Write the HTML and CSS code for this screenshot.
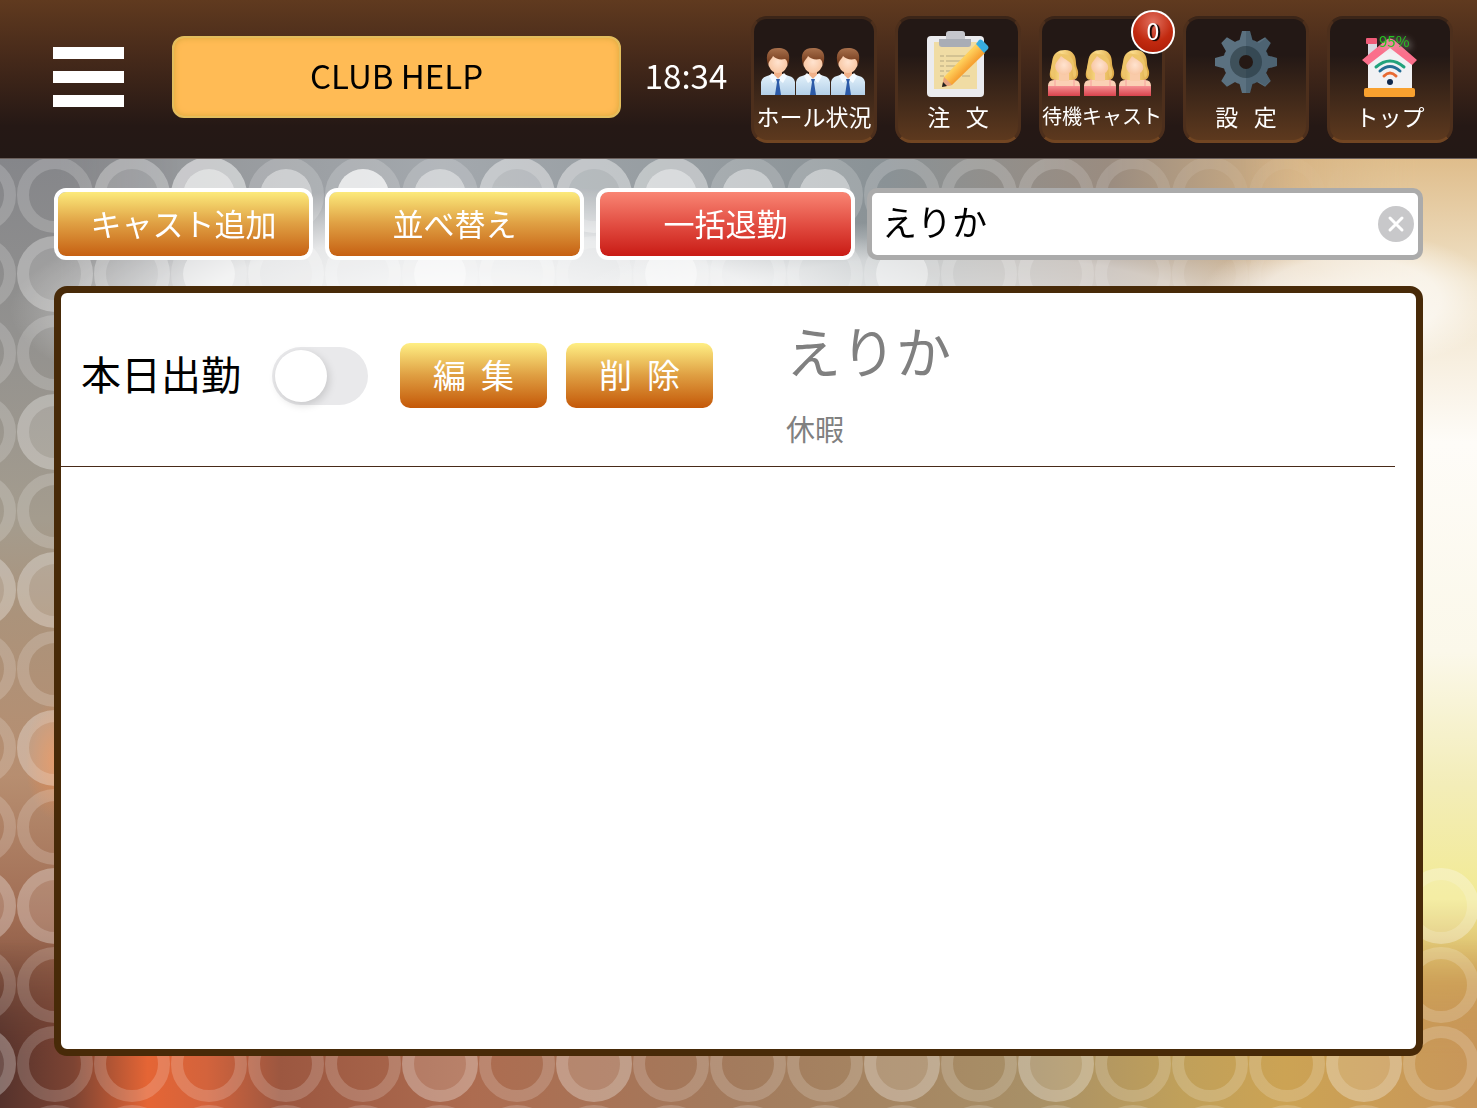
FILE: index.html
```html
<!DOCTYPE html>
<html lang="ja">
<head>
<meta charset="utf-8">
<meta name="viewport" content="width=device-width, initial-scale=1">
<title>CLUB HELP</title>
<link rel="stylesheet" href="styles.css">
</head>
<body>
<svg class="symbols" aria-hidden="true">
  <defs>
    <linearGradient id="hair-brown" x1="0" y1="0" x2="0" y2="1"><stop offset="0" stop-color="#a8704c"/><stop offset="1" stop-color="#6e3517"/></linearGradient>
    <linearGradient id="shirt" x1="0" y1="0" x2="0" y2="1"><stop offset="0" stop-color="#e4f2fb"/><stop offset="1" stop-color="#b4d0e8"/></linearGradient>
    <radialGradient id="skin"><stop offset="0" stop-color="#ffe3cf"/><stop offset="1" stop-color="#f8c7a4"/></radialGradient>
    <linearGradient id="hair-blonde" x1="0" y1="0" x2="1" y2="0"><stop offset="0" stop-color="#e2b24c"/><stop offset=".4" stop-color="#fbdc8c"/><stop offset="1" stop-color="#dda845"/></linearGradient>
    <linearGradient id="dress" x1="0" y1="0" x2="0" y2="1"><stop offset="0" stop-color="#f58f92"/><stop offset="1" stop-color="#d9434d"/></linearGradient>
    <linearGradient id="pencil" x1="0" y1="0" x2="1" y2="1"><stop offset=".42" stop-color="#ffd05c"/><stop offset=".58" stop-color="#f7a233"/></linearGradient>
    <symbol id="man" viewBox="0 0 34 48">
      <path d="M0 47V34q1-5 6-6l6-2h10l6 2q5 1 6 6v13z" fill="url(#shirt)"/>
      <path d="M13 21h8v6l-4 4-4-4z" fill="#f0b088"/>
      <path d="M11 25l6 6-5 4-4-7zM23 25l-6 6 5 4 4-7z" fill="#f4faff"/>
      <path d="M15 31h4l-1 3 2 13h-6l2-13z" fill="#2d5ba8"/>
      <ellipse cx="17" cy="14" rx="10" ry="11" fill="url(#skin)"/>
      <path d="M7 17C4 6 7 0 17 0c11 0 13 7 10 17-1-3-1-5-3-6-5 1-9 0-12-3-1 3-4 4-5 9z" fill="url(#hair-brown)"/>
    </symbol>
    <symbol id="woman" viewBox="0 0 34 46">
      <path d="M5 12C6 3 11 0 18 0c8 0 11 6 11 13 0 5 3 7 2 12-1 4-3 5-6 5H8c-4 0-6-3-5-8 1-3 1-6 2-10z" fill="url(#hair-blonde)"/>
      <path d="M1 45V36q0-6 6-6h20q6 0 6 6v9z" fill="#fbd0b5"/>
      <path d="M12 22h10v9H12z" fill="#f9cba9"/>
      <ellipse cx="17" cy="15" rx="9" ry="10" fill="url(#skin)"/>
      <path d="M14 6c-2 4-5 5-6 10-1 5 1 8-1 12-4-1-4-8-2-13C6 8 8 2 15 4c7 0 12 4 12 12 3 5 3 10 0 12-2-5-1-8-2-12-1-5-7-6-11-10z" fill="#eec56a"/>
      <path d="M1 46V36h32v10z" fill="url(#dress)"/>
      <path d="M8 29v7M27 29v7" stroke="#f7a09c"/>
    </symbol>
  </defs>
</svg>

<svg class="backdrop" viewBox="0 158 1477 950" preserveAspectRatio="none" aria-hidden="true">
  <defs>
    <linearGradient id="left-side" x1="0" y1="0" x2="0" y2="1">
      <stop offset="0" stop-color="#85868a"/><stop offset=".18" stop-color="#92918f"/><stop offset=".38" stop-color="#a49c8e"/><stop offset=".48" stop-color="#ab937b"/><stop offset=".65" stop-color="#b78e70"/><stop offset=".8" stop-color="#a06c53"/><stop offset="1" stop-color="#5c3327"/>
    </linearGradient>
    <linearGradient id="top-side" x1="0" y1="0" x2="1" y2="0">
      <stop offset="0" stop-color="#8b8c8e"/><stop offset=".3" stop-color="#a3a8ad"/><stop offset=".6" stop-color="#8a9296"/><stop offset=".75" stop-color="#9a8c80"/><stop offset=".88" stop-color="#d4b183"/><stop offset="1" stop-color="#e0c593"/>
    </linearGradient>
    <linearGradient id="right-side" x1="0" y1="0" x2="0" y2="1">
      <stop offset="0" stop-color="#dfbd8b"/><stop offset=".13" stop-color="#f0e2c8"/><stop offset=".3" stop-color="#fefcf8"/><stop offset=".52" stop-color="#fbf8ea"/><stop offset=".66" stop-color="#f3edb8"/><stop offset=".78" stop-color="#f2ea94"/><stop offset=".87" stop-color="#d0a558"/><stop offset="1" stop-color="#b98150"/>
    </linearGradient>
    <linearGradient id="bottom-side" x1="0" y1="0" x2="1" y2="0">
      <stop offset="0" stop-color="#55322c"/><stop offset=".05" stop-color="#7d4433"/><stop offset=".1" stop-color="#e56535"/><stop offset=".14" stop-color="#d3633c"/><stop offset=".19" stop-color="#9c5740"/><stop offset=".32" stop-color="#ad6c50"/><stop offset=".5" stop-color="#a37b5d"/><stop offset=".7" stop-color="#a89067"/><stop offset=".8" stop-color="#c0a05a"/><stop offset=".87" stop-color="#cca354"/><stop offset="1" stop-color="#c8965a"/>
    </linearGradient>
    <linearGradient id="fade-right"><stop offset=".3" stop-color="#fff"/><stop offset="1" stop-color="#fff" stop-opacity="0"/></linearGradient>
    <linearGradient id="fade-left"><stop offset="0" stop-color="#fff" stop-opacity="0"/><stop offset=".75" stop-color="#fff"/></linearGradient>
    <linearGradient id="fade-up" x1="0" y1="0" x2="0" y2="1"><stop offset="0" stop-color="#fff" stop-opacity="0"/><stop offset=".7" stop-color="#fff"/></linearGradient>
    <linearGradient id="fade-rings"><stop offset=".7" stop-color="#fff"/><stop offset=".92" stop-color="#fff" stop-opacity="0"/></linearGradient>
    <mask id="left-mask"><rect y="158" width="180" height="950" fill="url(#fade-right)"/></mask>
    <mask id="right-mask"><rect x="1240" y="158" width="237" height="950" fill="url(#fade-left)"/></mask>
    <mask id="bottom-mask"><rect x="0" y="940" width="1477" height="168" fill="url(#fade-up)"/></mask>
    <mask id="ring-mask"><rect y="158" width="1477" height="800" fill="url(#fade-rings)"/><rect y="867" width="1477" height="241" fill="#fff"/></mask>
    <radialGradient id="glow"><stop offset="0" stop-color="#fff" stop-opacity=".95"/><stop offset=".6" stop-color="#fff" stop-opacity=".75"/><stop offset="1" stop-color="#fff" stop-opacity="0"/></radialGradient>
    <radialGradient id="ember"><stop offset="0" stop-color="#f08a4a" stop-opacity=".7"/><stop offset="1" stop-color="#f08a4a" stop-opacity="0"/></radialGradient>
    <pattern id="rings" x="17" y="156" width="77" height="79" patternUnits="userSpaceOnUse">
      <circle cx="38" cy="39" r="32" fill="none" stroke="#fff" stroke-opacity=".18" stroke-width="12"/>
    </pattern>
    <circle id="disc" r="38" fill="#fff" fill-opacity=".15"/>
    <circle id="dot" r="26" fill="#fff" fill-opacity=".5"/>
  </defs>
  <rect y="158" width="1477" height="950" fill="url(#top-side)"/>
  <rect y="158" width="180" height="950" fill="url(#left-side)" mask="url(#left-mask)"/>
  <rect x="1240" y="158" width="237" height="950" fill="url(#right-side)" mask="url(#right-mask)"/>
  <rect y="940" width="1477" height="168" fill="url(#bottom-side)" mask="url(#bottom-mask)"/>
  <ellipse cx="480" cy="310" rx="470" ry="125" fill="url(#glow)"/>
  <ellipse cx="960" cy="310" rx="400" ry="90" fill="url(#glow)" opacity=".7"/>
  <ellipse cx="1350" cy="300" rx="150" ry="70" fill="url(#glow)" opacity=".8"/>
  <ellipse cx="55" cy="760" rx="30" ry="60" fill="url(#ember)"/>
  <rect y="158" width="1477" height="950" fill="url(#rings)" mask="url(#ring-mask)"/>
  <g>
    <use href="#disc" x="132" y="195"/><use href="#disc" x="209" y="195"/><use href="#disc" x="209" y="195"/><use href="#disc" x="209" y="195"/><use href="#dot" x="209" y="195"/><use href="#dot" x="286" y="195"/><use href="#dot" x="363" y="195"/><use href="#dot" x="363" y="195"/>
    <use href="#dot" x="440" y="195"/><use href="#disc" x="517" y="195"/><use href="#disc" x="517" y="195"/><use href="#disc" x="594" y="195"/><use href="#disc" x="594" y="195"/><use href="#disc" x="671" y="195"/><use href="#disc" x="671" y="195"/><use href="#dot" x="671" y="195"/>
    <use href="#dot" x="748" y="195"/><use href="#dot" x="825" y="195"/>
    <use href="#disc" x="132" y="274"/><use href="#dot" x="209" y="274"/><use href="#disc" x="286" y="274"/><use href="#disc" x="363" y="274"/><use href="#dot" x="440" y="274"/><use href="#disc" x="517" y="274"/><use href="#dot" x="671" y="274"/><use href="#dot" x="902" y="274"/>
    <use href="#disc" x="55" y="274"/><use href="#disc" x="55" y="432"/><use href="#disc" x="55" y="590"/><use href="#disc" x="55" y="748"/><use href="#disc" x="55" y="906"/>
    <use href="#disc" x="-22" y="590"/><use href="#disc" x="-22" y="906"/><use href="#disc" x="-22" y="1064"/>
    <use href="#disc" x="440" y="1064"/><use href="#disc" x="594" y="1064"/><use href="#disc" x="902" y="1064"/><use href="#disc" x="1056" y="1064"/><use href="#disc" x="1364" y="1064"/>
    <use href="#disc" x="1441" y="906"/>
  </g>
</svg>

<header class="header">
  <button class="menu" type="button" aria-label="メニュー"><span></span><span></span><span></span></button>
  <button class="shop" type="button">CLUB HELP</button>
  <time class="clock">18:34</time>
  <nav class="nav">
    <button class="tile" type="button">
      <svg class="tile-icon" viewBox="0 0 110 70" aria-hidden="true">
        <use href="#man" x="2" y="20" width="34" height="48"/><use href="#man" x="37" y="20" width="34" height="48"/><use href="#man" x="72" y="20" width="34" height="48"/>
      </svg>
      <span>ホール状況</span>
    </button>
    <button class="tile" type="button">
      <svg class="tile-icon" viewBox="0 0 110 70" aria-hidden="true">
        <rect x="24" y="8" width="57" height="61" rx="4" fill="#ebebee"/>
        <path d="M31 14h43v47H31z" fill="#f0dca4"/>
        <path d="M37 28h4m2 0h20M37 33h4m2 0h20M37 38h4m2 0h18M37 43h4m2 0h12M37 48h4m18 0h8" stroke="#c9b98c" stroke-width="1.5"/>
        <path d="M36 11h32v5q0 3-3 3H39q-3 0-3-3z" fill="#a9adb5"/>
        <path d="M43 11V6q0-3 3-3h13q3 0 3 3v5z" fill="#c5c6cc"/>
        <path d="M39 59l2-10 32-33 9 9-33 32z" fill="url(#pencil)"/>
        <path d="M39 59l2-10 8 8z" fill="#e6a27d"/><path d="M39 59l1-5 4 4z" fill="#202020"/>
        <path d="M73 16l3-4q1-1 3 0l6 6q1 2 0 3l-4 4z" fill="#37ade0"/>
      </svg>
      <span>注&nbsp;&nbsp;&nbsp;文</span>
    </button>
    <button class="tile" type="button">
      <svg class="tile-icon" viewBox="0 0 110 70" aria-hidden="true">
        <use href="#woman" x="0" y="22" width="34" height="46"/><use href="#woman" x="36" y="22" width="34" height="46"/><use href="#woman" x="71" y="22" width="34" height="46"/>
      </svg>
      <span class="small">待機キャスト</span>
      <b class="badge">0</b>
    </button>
    <button class="tile" type="button">
      <svg class="tile-icon" viewBox="0 0 110 70" aria-hidden="true">
        <g transform="translate(55 34)">
          <g fill="#5b7180">
            <circle r="23"/>
            <path id="tooth" d="M-7-20l3-11h8l3 11zM-7 20l3 11h8l3-11z"/><use href="#tooth" transform="rotate(45)"/><use href="#tooth" transform="rotate(90)"/><use href="#tooth" transform="rotate(135)"/>
          </g>
          <circle r="16" fill="#3e505a"/>
          <path d="M0-31h4l3 9 6 3 7-5 5 6-4 6 2 6 8 2v8l-8 2-3 6 5 6-6 6-6-4-6 2-3 9H0z" fill="#1c3040" fill-opacity=".22"/>
          <circle r="7" fill="#251915"/>
        </g>
      </svg>
      <span>設&nbsp;&nbsp;&nbsp;定</span>
    </button>
    <button class="tile" type="button">
      <svg class="tile-icon" viewBox="0 0 110 70" aria-hidden="true">
        <path d="M33 14h9v18h-9z" fill="#d9d9e2"/><rect x="31" y="10" width="11" height="6" rx="1" fill="#ef5b78"/>
        <path d="M33 35l22-20 22 20v27H33z" fill="#f1f1f3"/>
        <path d="M27 32l24-20q4-3 8 0l23 20-5 5-22-17-22 17z" fill="#fb6f8b"/>
        <g fill="none" stroke-width="3" stroke-linecap="round"><path d="M41 39q14-12 28 0" stroke="#22a27c"/><path d="M45 43q10-9 20 0" stroke="#246c94"/><path d="M49 48q6-6 12 0" stroke="#e86a32"/></g>
        <circle cx="55" cy="54" r="3" fill="#10294d"/><rect x="29" y="60" width="51" height="9" rx="2" fill="#f9a12f"/>
      </svg>
      <span>トップ</span>
      <small class="signal">95%</small>
    </button>
  </nav>
</header>

<main class="main">
  <div class="toolbar">
    <button class="action" type="button">キャスト追加</button>
    <button class="action" type="button">並べ替え</button>
    <button class="action danger" type="button">一括退勤</button>
    <form class="search">
      <input type="text" value="えりか" aria-label="キャスト検索">
      <button class="clear" type="reset" aria-label="消去"><svg viewBox="0 0 36 36" aria-hidden="true"><path d="M12 12l12 12M24 12L12 24" stroke="#fff" stroke-width="3" stroke-linecap="round"/></svg></button>
    </form>
  </div>
  <section class="panel">
    <ul class="casts">
      <li class="cast">
        <label class="attend"><span>本日出勤</span><input class="switch" type="checkbox" role="switch"></label>
        <div class="edit">
          <button class="mini" type="button">編&nbsp;&nbsp;集</button>
          <button class="mini" type="button">削&nbsp;&nbsp;除</button>
        </div>
        <div class="who">
          <h2>えりか</h2>
          <p>休暇</p>
        </div>
      </li>
    </ul>
  </section>
</main>
</body>
</html>
```
FILE: styles.css
```css
* { box-sizing: border-box; }

body {
  margin: 0;
  min-height: 100vh;
  display: flex;
  flex-direction: column;
  font-family: "Noto Sans CJK JP", sans-serif;
  color: #000;
}

button, input { font: inherit; color: inherit; }
button { border: 0; padding: 0; background: none; cursor: pointer; white-space: nowrap; }

.symbols { position: absolute; width: 0; height: 0; }

.backdrop {
  position: fixed;
  top: 158px;
  left: 0;
  width: 100%;
  height: calc(100% - 158px);
  z-index: -1;
}

.header {
  display: flex;
  align-items: center;
  height: 159px;
  padding: 0 24px 4px 53px;
  background: linear-gradient(#603a1f, #45291a 38%, #251815 80%, #231815);
  border-bottom: 1px solid #6b605c;
}

.menu { display: grid; gap: 12px; width: 71px; flex: none; margin-right: 48px; }
.menu span { height: 12px; background: #fff; }

.shop {
  flex: 1;
  height: 82px;
  padding-bottom: 4px;
  border: 2px solid #e2bd5d;
  border-radius: 12px;
  background: #ffbb55;
  box-shadow: inset 0 0 6px #d9a83c;
  font-size: 33px;
}

.clock { flex: none; width: 130px; padding-bottom: 4px; text-align: center; color: #fff; font-size: 33px; }

.nav { display: flex; gap: 18px; flex: none; margin-top: 4px; }

.tile {
  position: relative;
  display: flex;
  flex-direction: column;
  align-items: center;
  width: 126px;
  height: 127px;
  padding-top: 9px;
  border: 3px solid #4d2f1c;
  border-color: #3b2518 #4d2f1c #714522;
  border-radius: 16px;
  background: linear-gradient(#231815 30%, #5d391e);
  color: #fff;
  font-size: 23px;
  line-height: 36px;
}
.tile-icon { width: 110px; height: 70px; flex: none; }
.tile .small { font-size: 20px; }

.badge {
  position: absolute;
  top: -9px;
  right: -13px;
  width: 44px;
  height: 44px;
  border: 2px solid #fff;
  border-radius: 50%;
  background: radial-gradient(circle at 50% 25%, #e0705e, #c22a10 55%, #a81a05);
  font-size: 23px;
  font-weight: 400;
  line-height: 36px;
  text-align: center;
  text-shadow: 2px 1px 1px #000;
}

.signal {
  position: absolute;
  top: 12px;
  left: 49px;
  color: #25c421;
  font-size: 15px;
  line-height: 20px;
  text-shadow: 2px 2px 6px #c8c8c8;
}

.main { flex: 1; display: flex; flex-direction: column; padding: 29px 54px 52px; }

.toolbar { display: grid; grid-template-columns: 259px 259px 259px 1fr; gap: 12px; margin-bottom: 26px; }

.action {
  height: 72px;
  padding-bottom: 4px;
  border: 4px solid #fff;
  border-radius: 12px;
  background: linear-gradient(#fcea7b, #e0a144 48%, #c66012) padding-box;
  color: #fff;
  font-size: 31px;
}
.danger { background: linear-gradient(#f98573, #e0493e 55%, #c91b15) padding-box; }

.search {
  display: flex;
  align-items: center;
  height: 72px;
  padding: 0 4px 0 10px;
  border: 5px solid #ababab;
  border-radius: 10px;
  background: #fff;
}
.search input { flex: 1; min-width: 0; border: 0; padding: 0 0 6px; outline: 0; background: none; font-size: 35px; line-height: 52px; }
.clear { width: 36px; height: 36px; border-radius: 50%; background: #c8c8ca; }
.clear svg { display: block; fill: none; }

.panel { flex: 1; border: 7px solid #482a08; border-radius: 13px; background: #fff; }

.casts { list-style: none; margin: 0; padding: 0 21px 0 0; }
.cast { display: flex; align-items: center; height: 174px; padding: 0 0 8px 20px; border-bottom: 1px solid #482a18; }
.attend { display: flex; align-items: center; gap: 31px; font-size: 40px; line-height: 56px; white-space: nowrap; }
.attend span { padding-bottom: 6px; }

.switch {
  appearance: none;
  width: 96px;
  height: 58px;
  margin: 0;
  padding: 3px;
  border-radius: 29px;
  background: #e9e9eb;
}
.switch::before {
  content: "";
  display: block;
  width: 52px;
  height: 52px;
  border-radius: 50%;
  background: #fff;
  box-shadow: 2px 3px 8px #00000026;
}
.switch:checked { background: #34c759; }
.switch:checked::before { margin-left: auto; }

.edit { display: flex; gap: 19px; margin-left: 32px; }
.mini {
  width: 147px;
  height: 65px;
  padding-bottom: 4px;
  border-radius: 10px;
  background: linear-gradient(#ffef84, #e0a144 48%, #c45808);
  color: #fff;
  font-size: 33px;
}

.who { margin-left: 73px; padding-top: 8px; color: #808080; }
.who h2 { margin: 0; font-size: 55px; font-weight: 400; line-height: 96px; }
.who p { margin: 0; font-size: 29px; line-height: 62px; }
```
